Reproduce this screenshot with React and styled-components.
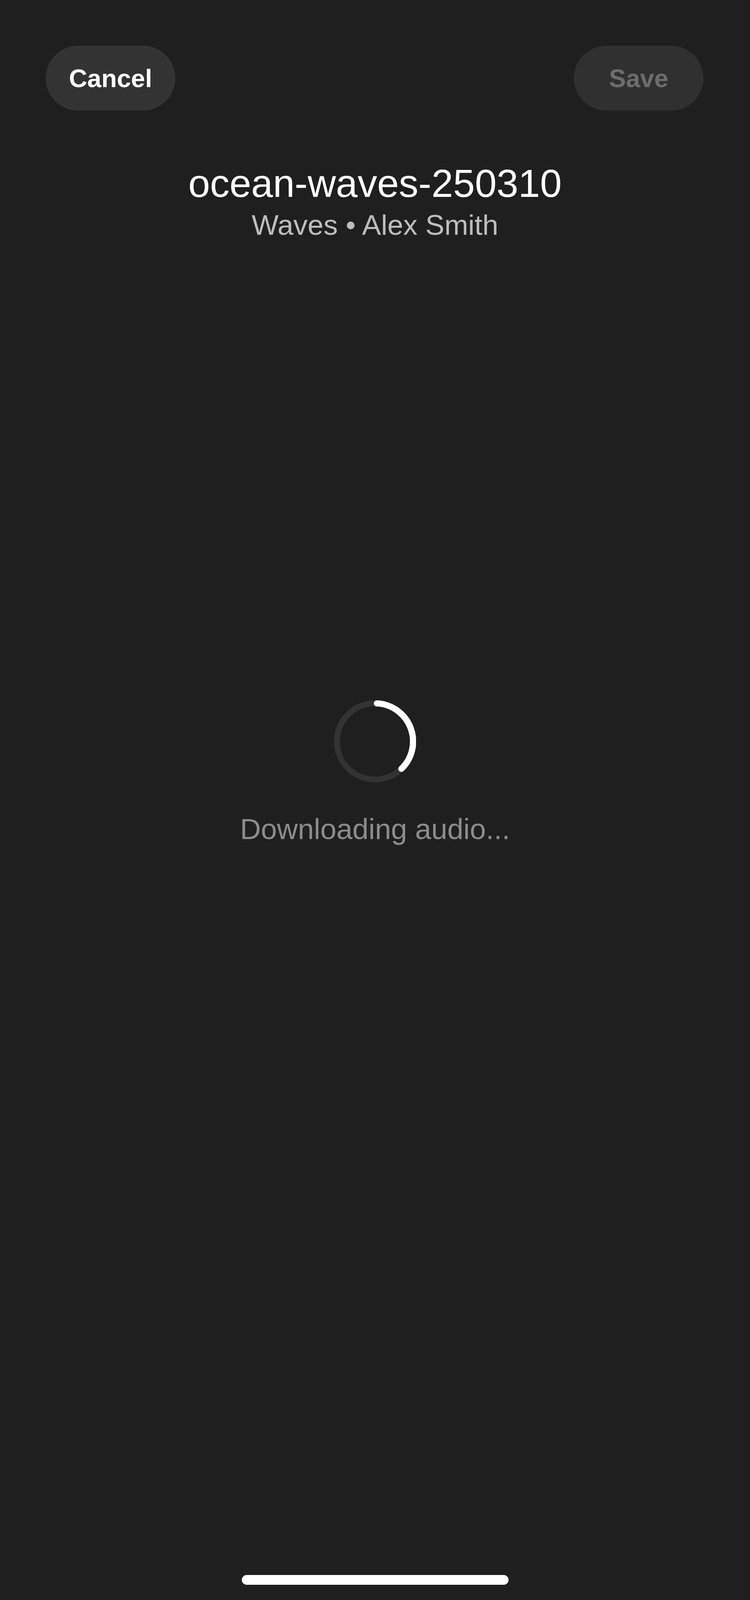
import React from 'react'
import styled, { createGlobalStyle } from 'styled-components'

const GlobalStyle = createGlobalStyle`
  html, body {
    margin: 0;
    padding: 0;
    background: #1f1f1f;
  }
  body {
    font-family: "Liberation Sans", Arial, sans-serif;
  }
`

const Page = styled.div`
  width: 1920px;
  height: 100vh;
  max-height: 4162px;
  display: flex;
  flex-direction: column;
  align-items: stretch;
  background: #1f1f1f;
  overflow: hidden;
`

const TopBar = styled.div`
  display: flex;
  justify-content: space-between;
  align-items: center;
  padding: 117px 119px 0 117px;
`

const PillButton = styled.button`
  width: 332px;
  height: 166px;
  border: none;
  border-radius: 83px;
  background: ${props => props.disabled ? '#303030' : '#333333'};
  color: ${props => props.disabled ? '#6d6d6d' : '#ffffff'};
  font-family: "Liberation Sans", Arial, sans-serif;
  font-weight: 700;
  font-size: 65px;
  line-height: 1;
  padding: 0;
  display: flex;
  align-items: center;
  justify-content: center;
`

const Header = styled.div`
  margin-top: 129px;
  display: flex;
  flex-direction: column;
  align-items: center;
`

const Title = styled.div`
  font-size: 100px;
  line-height: 115px;
  color: #ffffff;
  font-weight: 400;
`

const Subtitle = styled.div`
  margin-top: 7px;
  font-size: 73px;
  line-height: 83px;
  color: #bdbdbd;
`

const Loader = styled.div`
  margin-top: 1176px;
  display: flex;
  flex-direction: column;
  align-items: center;
`

const SpinnerSvg = styled.svg`
  width: 210px;
  height: 210px;
  display: block;
`

const Status = styled.div`
  margin-top: 77px;
  font-size: 74px;
  line-height: 85px;
  color: #8c8c8c;
`

const Spacer = styled.div`
  flex: 1;
`

const HomeBar = styled.div`
  align-self: center;
  flex-shrink: 0;
  width: 683px;
  height: 25px;
  border-radius: 13px;
  background: #ffffff;
  margin-bottom: 39px;
`

function Spinner() {
  return (
    <SpinnerSvg viewBox="0 0 210 210">
      <circle cx="105" cy="105" r="97.5" fill="none" stroke="#333333" strokeWidth="15" />
      <path
        d="M110.1 7.6 A97.5 97.5 0 0 1 172.7 175.1"
        fill="none"
        stroke="#ffffff"
        strokeWidth="16"
        strokeLinecap="round"
      />
    </SpinnerSvg>
  )
}

export default function App() {
  return (
    <>
      <GlobalStyle />
      <Page>
        <TopBar>
          <PillButton>Cancel</PillButton>
          <PillButton disabled>Save</PillButton>
        </TopBar>
        <Header>
          <Title>ocean-waves-250310</Title>
          <Subtitle>Waves • Alex Smith</Subtitle>
        </Header>
        <Loader>
          <Spinner />
          <Status>Downloading audio...</Status>
        </Loader>
        <Spacer />
        <HomeBar />
      </Page>
    </>
  )
}
